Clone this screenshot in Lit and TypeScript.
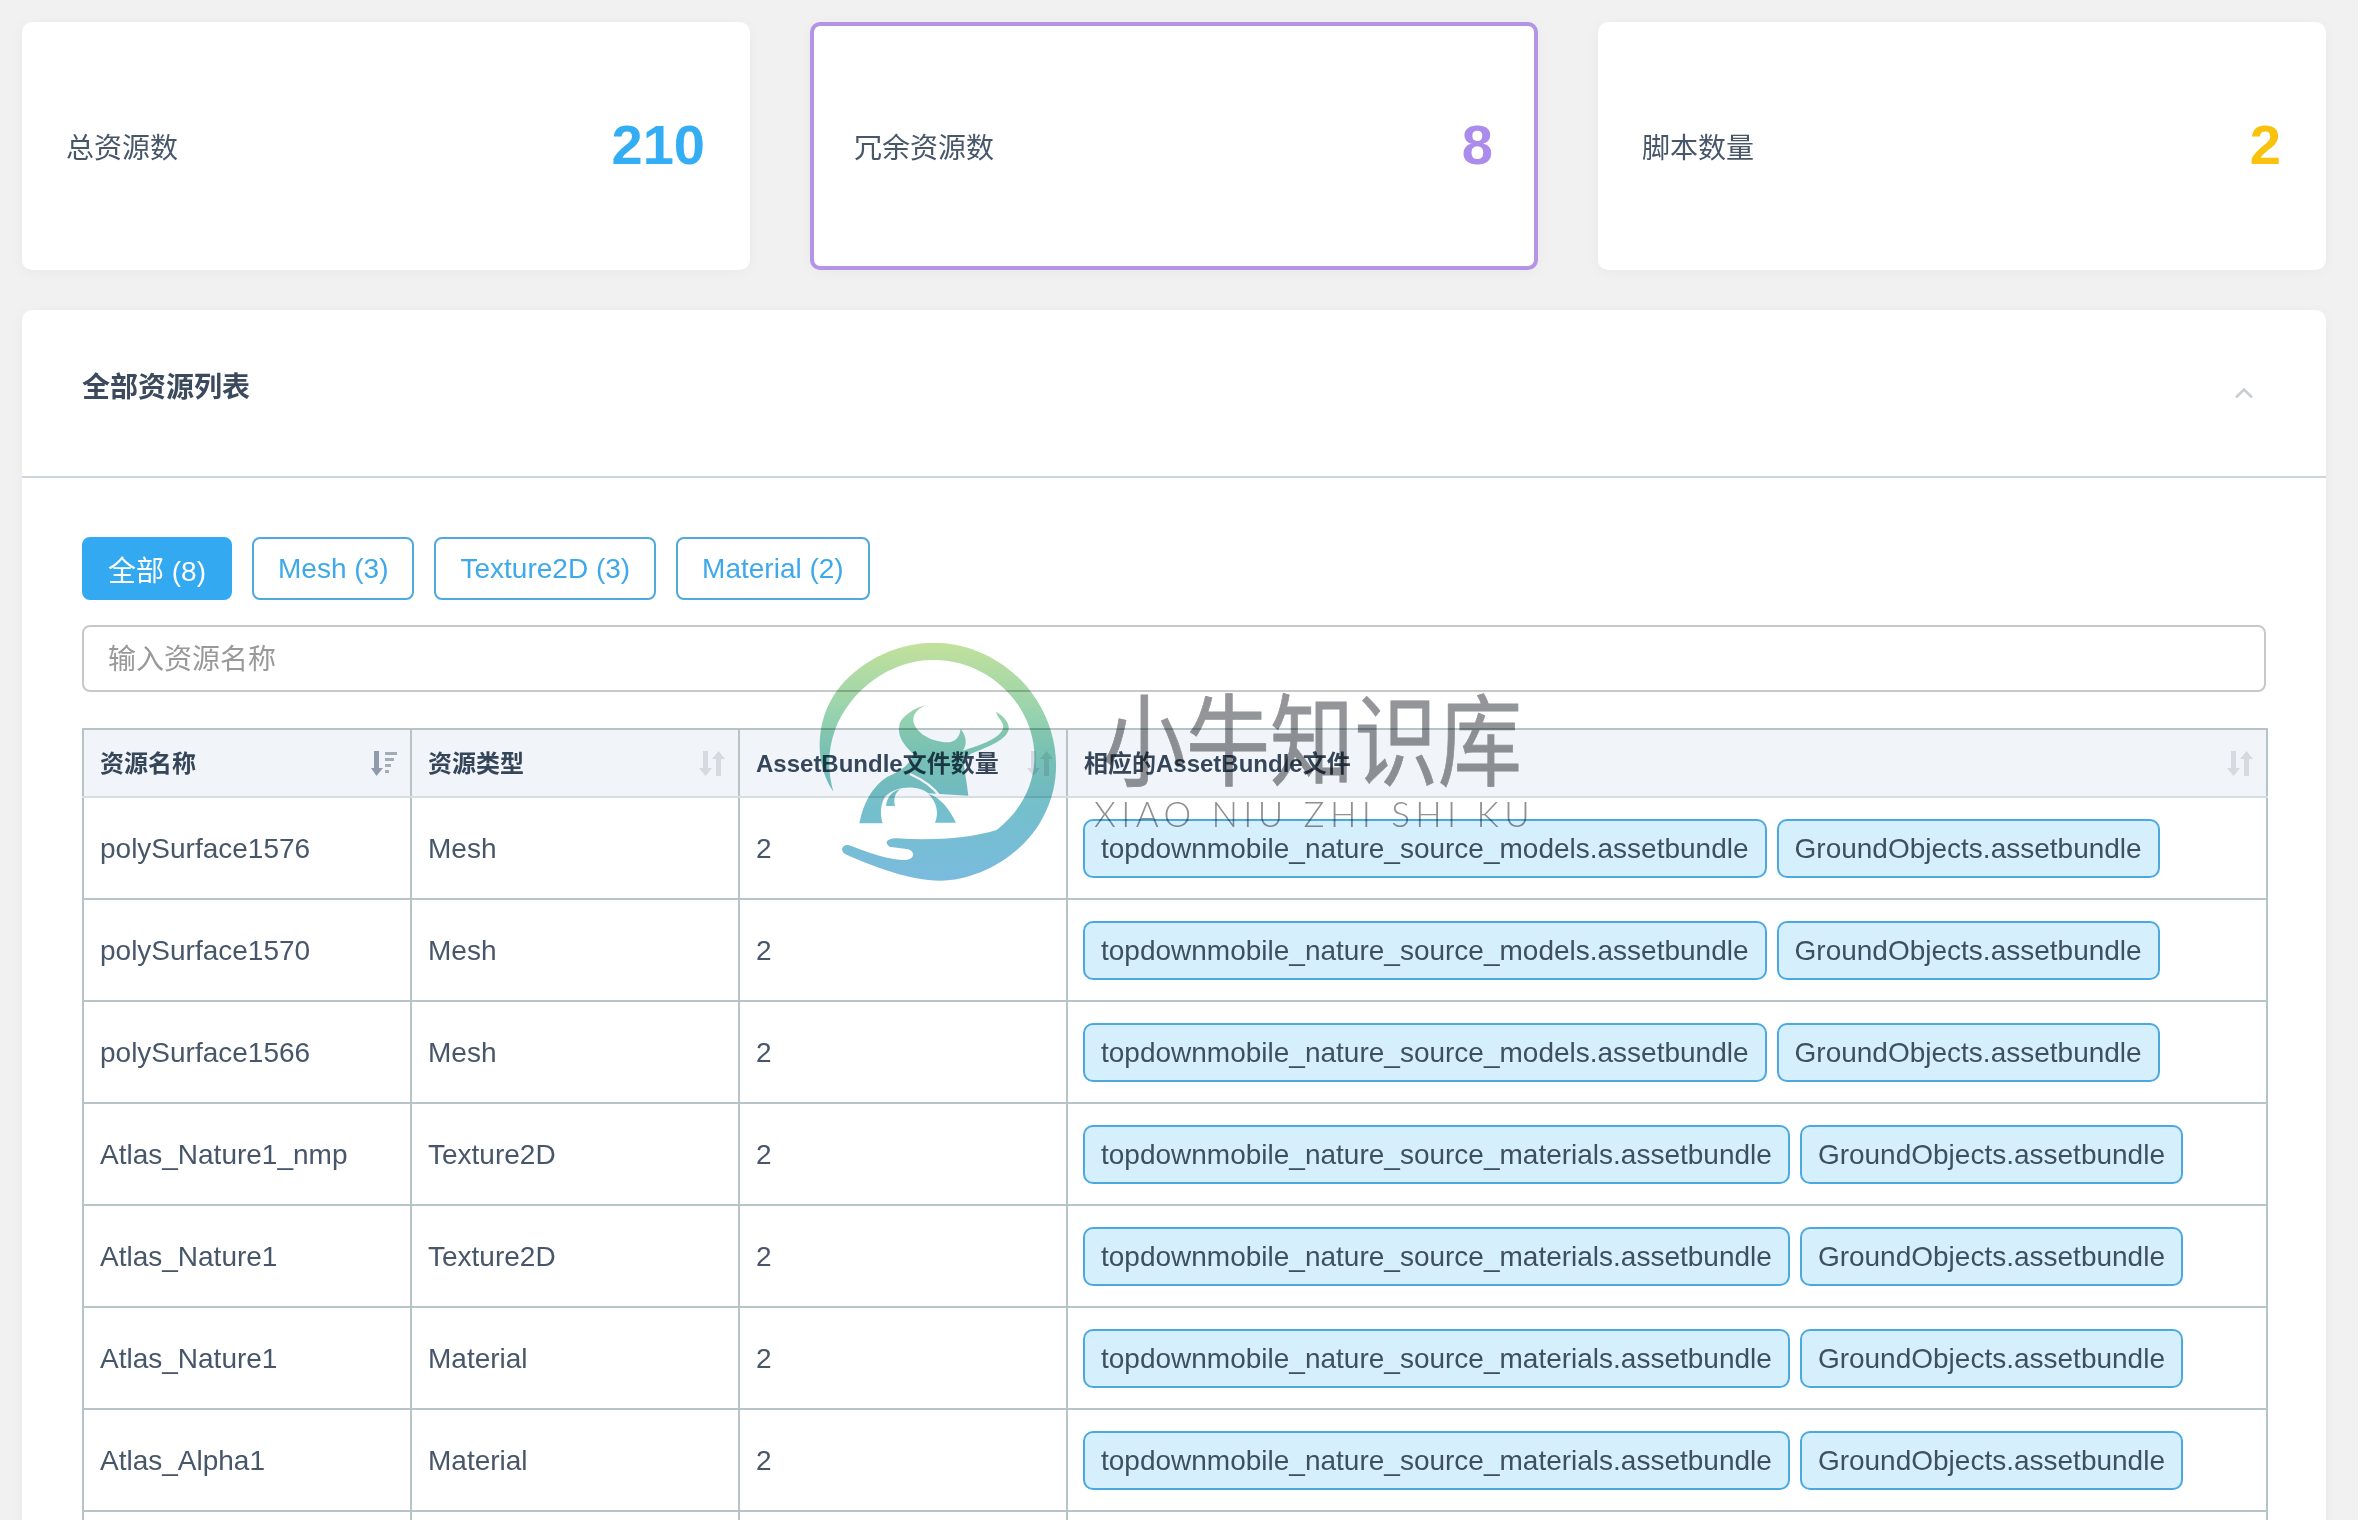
import { LitElement, html, css, svg } from 'lit';
import { customElement } from 'lit/decorators.js';

const MODELS = 'topdownmobile_nature_source_models.assetbundle';
const MATERIALS = 'topdownmobile_nature_source_materials.assetbundle';
const GROUND = 'GroundObjects.assetbundle';

const stats = [
  { label: '总资源数', value: '210', cls: 'blue' },
  { label: '冗余资源数', value: '8', cls: 'purple' },
  { label: '脚本数量', value: '2', cls: 'yellow' },
];

const filters = ['全部 (8)', 'Mesh (3)', 'Texture2D (3)', 'Material (2)'];

const rows = [
  ['polySurface1576', 'Mesh', MODELS],
  ['polySurface1570', 'Mesh', MODELS],
  ['polySurface1566', 'Mesh', MODELS],
  ['Atlas_Nature1_nmp', 'Texture2D', MATERIALS],
  ['Atlas_Nature1', 'Texture2D', MATERIALS],
  ['Atlas_Nature1', 'Material', MATERIALS],
  ['Atlas_Alpha1', 'Material', MATERIALS],
  ['Atlas_Alpha1', 'Texture2D', MATERIALS],
];

const sortActive = svg`
  <svg class="sort" viewBox="0 0 26 25" width="26" height="25">
    <path fill="#8f9bab" d="M3 0h5v17h4l-6.500 8L0 17h3z"/>
    <path fill="#a3adba" d="M14 1h12v3H14zM14 7h9v3h-9zM14 13h6v3h-6zM14 19h4v3h-4z"/>
  </svg>`;

const sortIdle = svg`
  <svg class="sort" viewBox="0 0 26 25" width="26" height="25">
    <path fill="#d5dae1" d="M4 0h5v17h4l-6.500 8L0 17h4zM17 25h5V8h4L19.500 0 13 8h4z"/>
  </svg>`;

@customElement('app-root')
export class AppRoot extends LitElement {
  static styles = css`
    :host {
      display: block;
      position: relative;
      height: 100vh;
      overflow: hidden;
      box-sizing: border-box;
      padding: 22px 32px 0 22px;
      background: #f1f1f1;
      color: #475669;
      font-family: "Liberation Sans", "Noto Sans CJK SC", sans-serif;
      font-size: 28px;
    }

    .cards {
      display: grid;
      grid-template-columns: repeat(3, 728px);
      gap: 60px;
    }

    .card {
      display: flex;
      align-items: center;
      justify-content: space-between;
      box-sizing: border-box;
      height: 248px;
      padding: 0 45px 0 44px;
      background: #fff;
      border-radius: 10px;
      box-shadow: 0 2px 14px rgba(0, 0, 0, 0.04);
    }

    .card.purple {
      padding: 0 41px 0 40px;
      border: 4px solid #b394e6;
    }

    .num {
      font-size: 56px;
      font-weight: 700;
      margin-top: -4px;
    }

    .num.blue { color: #33aef5; }
    .num.purple { color: #ab8cec; }
    .num.yellow { color: #f9c20e; }

    .panel {
      margin-top: 40px;
      background: #fff;
      border-radius: 10px 10px 0 0;
      box-shadow: 0 2px 14px rgba(0, 0, 0, 0.04);
    }

    .panel-head {
      display: flex;
      align-items: center;
      justify-content: space-between;
      box-sizing: border-box;
      height: 168px;
      padding: 0 73px 0 60px;
      border-bottom: 2px solid #ced4d9;
    }

    .panel-head h2 {
      margin: 0 0 16px;
      font-size: 28px;
      font-weight: 700;
      color: #3b4a5c;
    }

    .panel-body {
      padding: 59px 60px 0;
    }

    .filters {
      display: flex;
      gap: 20px;
    }

    .filter {
      box-sizing: border-box;
      height: 63px;
      padding: 0 24px;
      border: 2px solid #4ea9dc;
      border-radius: 8px;
      background: #fff;
      color: #3ea9ea;
      font: inherit;
    }

    .filter.active {
      background: #33a9f2;
      border-color: #33a9f2;
      color: #fff;
    }

    .search {
      display: block;
      box-sizing: border-box;
      width: 2184px;
      height: 67px;
      margin: 25px 0 36px;
      padding: 2px 24px 0;
      border: 2px solid #c8c8c8;
      border-radius: 8px;
      font: inherit;
      outline: none;
    }

    .search::placeholder {
      color: #999;
    }

    table {
      width: 2186px;
      table-layout: fixed;
      border-collapse: collapse;
    }

    th, td {
      box-sizing: border-box;
      padding: 0 13px 0 16px;
      border: 2px solid #b6c4c7;
      text-align: left;
    }

    th {
      height: 68px;
      background: #f1f4f8;
      border-bottom-color: #d8dde1;
      color: #36465a;
      font-size: 24px;
      font-weight: 700;
    }

    td {
      height: 102px;
      padding-top: 2px;
    }

    td.bundles {
      padding-top: 0;
      padding-left: 15px;
    }

    .th-in {
      display: flex;
      align-items: center;
      justify-content: space-between;
    }

    .th-in span {
      margin-top: -3px;
      white-space: nowrap;
    }

    .sort {
      flex: none;
    }

    .tags {
      display: flex;
      gap: 10px;
    }

    .tag {
      box-sizing: border-box;
      height: 59px;
      line-height: 55px;
      padding: 0 16px 0 16px;
      border: 2px solid #4ba9e0;
      border-radius: 10px;
      background: #d6effc;
      color: #3f4f63;
      white-space: nowrap;
    }

    /* watermark over the page */
    .mark {
      position: absolute;
      left: 800px;
      top: 630px;
      mix-blend-mode: multiply;
      pointer-events: none;
    }

    .mark-cn {
      position: absolute;
      left: 1102px;
      top: 678px;
      font-size: 100px;
      line-height: 130px;
      color: #939598;
      -webkit-text-stroke: 0.8px #939598;
      transform: scaleX(0.84);
      transform-origin: left top;
      mix-blend-mode: multiply;
      white-space: nowrap;
      pointer-events: none;
    }

    .mark-en {
      position: absolute;
      left: 1094px;
      top: 792px;
      font-family: Lato, sans-serif;
      font-size: 35px;
      font-weight: 300;
      line-height: 42px;
      letter-spacing: 5.400px;
      color: #8f9194;
      mix-blend-mode: multiply;
      white-space: nowrap;
      pointer-events: none;
    }
  `;

  render() {
    return html`
      <div class="cards">
        ${stats.map(
          (s) => html`
            <div class="card ${s.cls === 'purple' ? 'purple' : ''}">
              <span>${s.label}</span>
              <span class="num ${s.cls}">${s.value}</span>
            </div>
          `
        )}
      </div>

      <div class="panel">
        <div class="panel-head">
          <h2>全部资源列表</h2>
          <svg width="18" height="10" viewBox="0 0 18 10">
            <path d="M1 9.500l8-8 8 8" fill="none" stroke="#c8cdd2" stroke-width="2.500"/>
          </svg>
        </div>
        <div class="panel-body">
          <div class="filters">
            ${filters.map(
              (f, i) => html`<button class="filter ${i === 0 ? 'active' : ''}">${f}</button>`
            )}
          </div>
          <input class="search" placeholder="输入资源名称" />
          <table>
            <colgroup>
              <col style="width:328px" />
              <col style="width:328px" />
              <col style="width:328px" />
              <col />
            </colgroup>
            <thead>
              <tr>
                <th><div class="th-in"><span>资源名称</span>${sortActive}</div></th>
                <th><div class="th-in"><span>资源类型</span>${sortIdle}</div></th>
                <th><div class="th-in"><span>AssetBundle文件数量</span>${sortIdle}</div></th>
                <th><div class="th-in"><span>相应的AssetBundle文件</span>${sortIdle}</div></th>
              </tr>
            </thead>
            <tbody>
              ${rows.map(
                ([name, type, bundle]) => html`
                  <tr>
                    <td>${name}</td>
                    <td>${type}</td>
                    <td>2</td>
                    <td class="bundles">
                      <div class="tags">
                        <span class="tag">${bundle}</span>
                        <span class="tag">${GROUND}</span>
                      </div>
                    </td>
                  </tr>
                `
              )}
            </tbody>
          </table>
        </div>
      </div>

      <svg class="mark" width="280" height="270" viewBox="0 0 840 810">
        <defs>
          <linearGradient id="wm" gradientUnits="userSpaceOnUse" x1="0" y1="38" x2="0" y2="752">
            <stop offset="0" stop-color="#c3e19b"/>
            <stop offset="0.45" stop-color="#80cbb8"/>
            <stop offset="0.7" stop-color="#74bfcc"/>
            <stop offset="1" stop-color="#7abbde"/>
          </linearGradient>
        </defs>
        <path fill="url(#wm)" d="M100 485C40 400 45 260 120 170C190 85 300 38 400 38C520 38 640 100 710 210C780 320 785 450 735 550C680 670 540 752 420 752C330 752 220 710 135 672C120 662 125 645 145 645C190 660 260 692 320 690C345 685 345 665 325 658L268 650C250 635 265 625 290 625C400 632 510 625 590 600C680 530 715 430 700 340C680 210 560 90 400 90C270 90 150 180 105 300C80 370 85 430 100 485Z"/>
        <path fill="url(#wm)" d="M378 225C345 240 332 262 345 288C360 315 395 332 425 335C450 340 478 335 482 296C500 318 502 345 488 362C540 345 605 325 610 290C608 272 592 262 588 245C612 258 632 282 625 302C612 335 555 352 512 372L490 388C495 430 502 470 505 497L385 490C355 465 290 465 255 500C240 525 240 555 248 580L178 580C190 520 215 470 262 440C300 425 330 405 340 372C310 345 292 318 298 288C300 262 340 235 378 225Z"/>
        <path fill="url(#wm)" d="M385 492C420 500 450 540 468 578L405 578C418 550 410 515 385 492ZM300 478C275 485 262 500 258 528L285 528C280 505 285 490 300 478Z"/>
        <path fill="none" stroke="#fff" stroke-width="7" d="M330 432C370 450 400 470 420 500"/>
      </svg>
      <div class="mark-cn">小牛知识库</div>
      <div class="mark-en">XIAO NIU ZHI SHI KU</div>
    `;
  }
}
